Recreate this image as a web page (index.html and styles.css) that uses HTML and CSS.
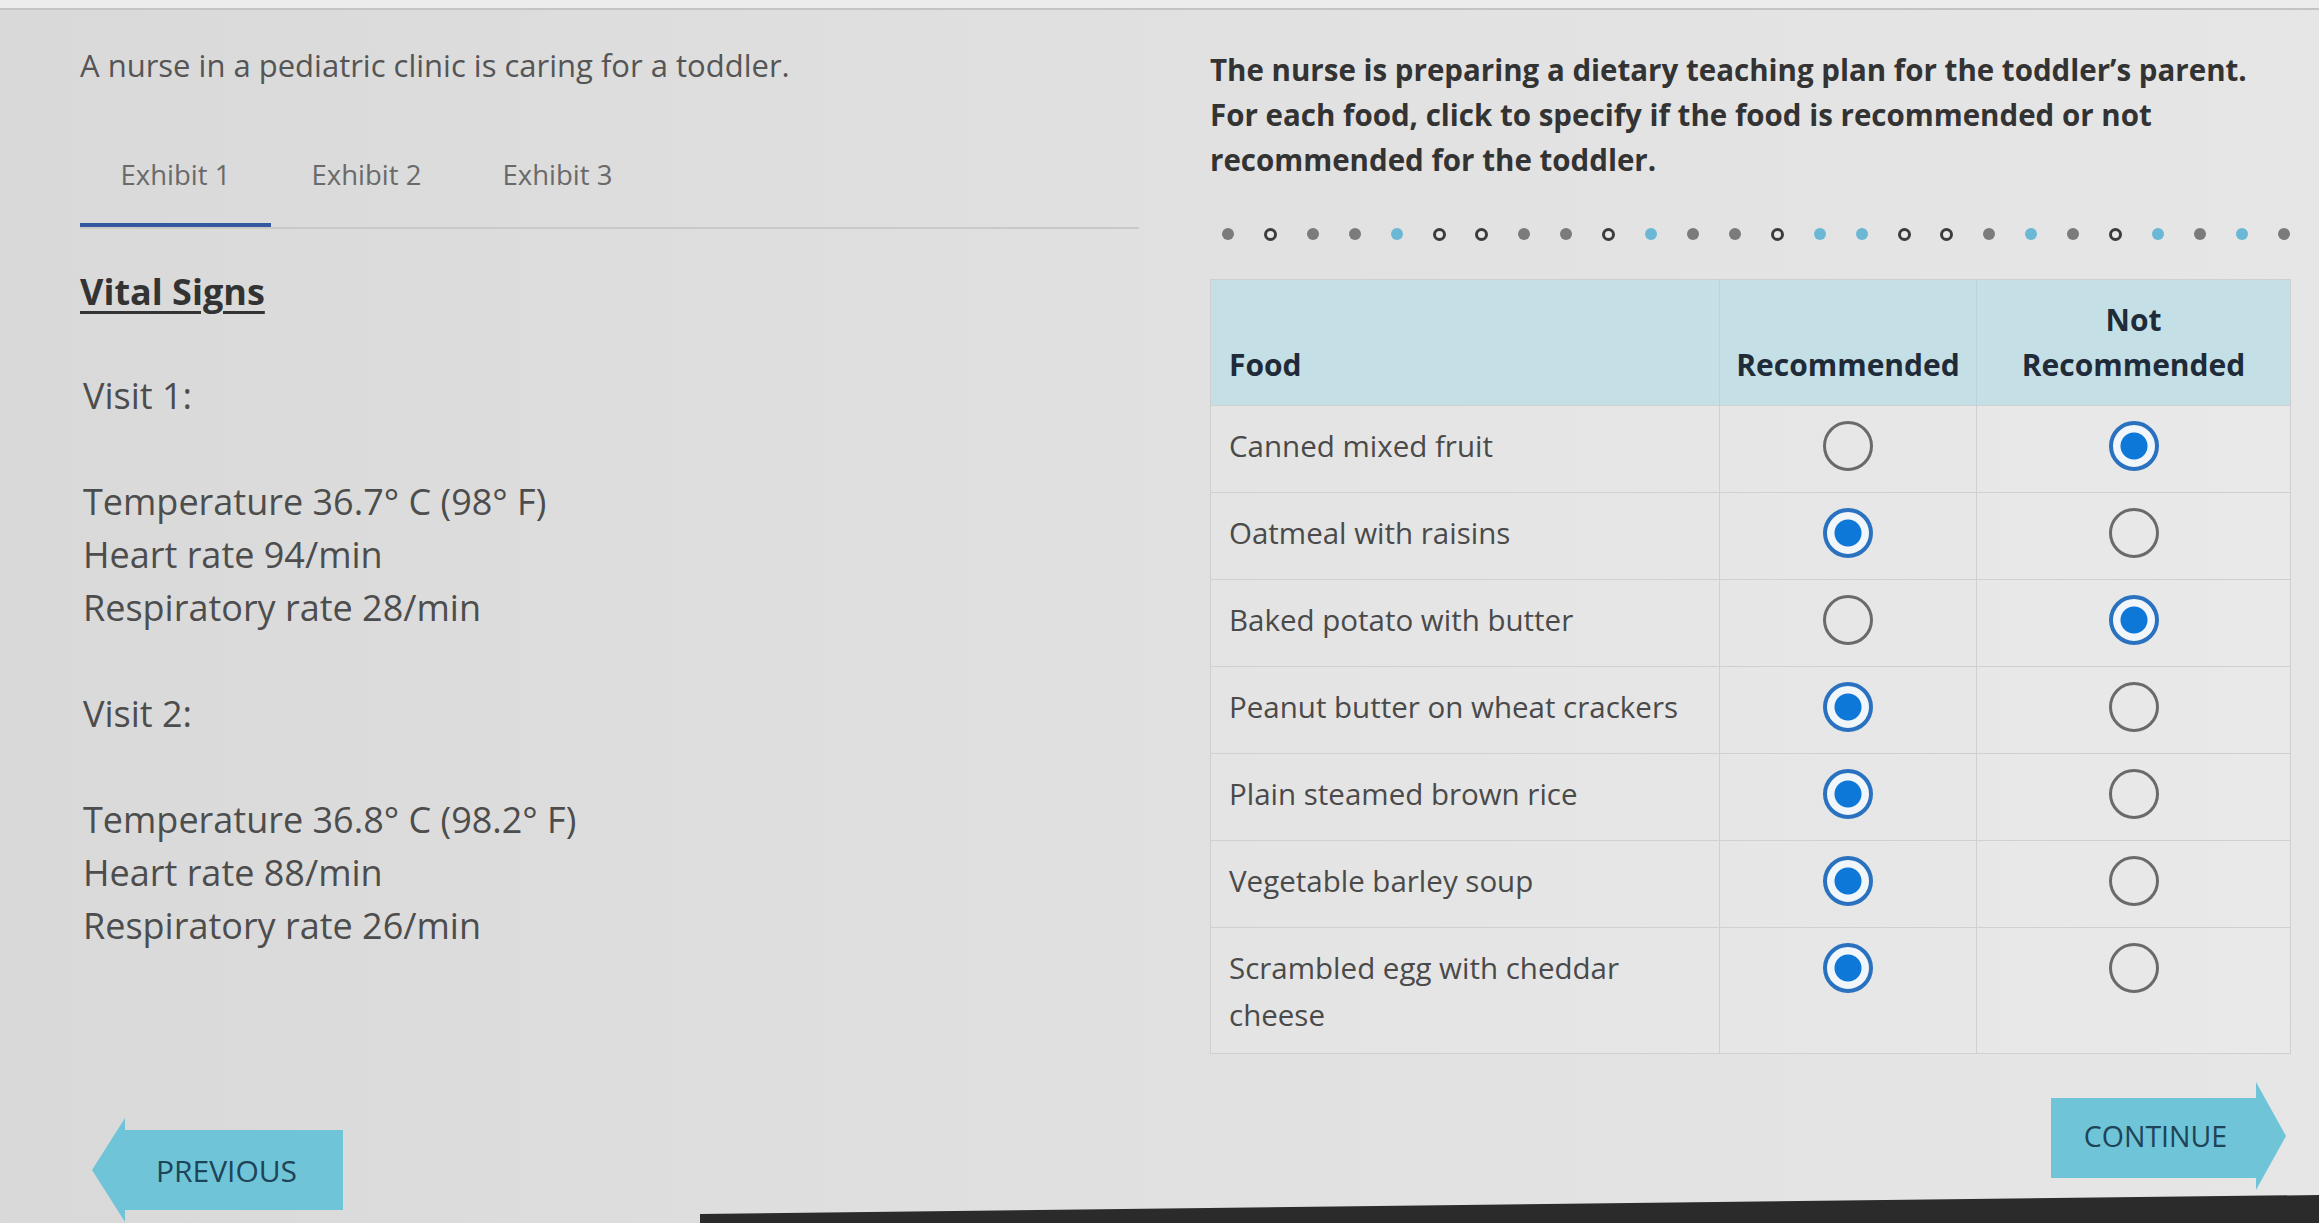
FILE: index.html
```html
<!DOCTYPE html>
<html lang="en">
<head>
<meta charset="utf-8">
<title>Dietary teaching plan</title>
<link rel="stylesheet" href="styles.css">
</head>
<body>
<div class="topbar"></div>
<main class="main">
  <section class="left">
    <p class="scenario">A nurse in a pediatric clinic is caring for a toddler.</p>
    <nav class="tabs">
      <div class="tab active">Exhibit 1</div>
      <div class="tab">Exhibit 2</div>
      <div class="tab">Exhibit 3</div>
    </nav>
    <h2 class="exhibit-title">Vital Signs</h2>
    <div class="vitals">
      <p class="gap-after">Visit 1:</p>
      <p>Temperature 36.7° C (98° F)</p>
      <p>Heart rate 94/min</p>
      <p class="gap-after">Respiratory rate 28/min</p>
      <p class="gap-after">Visit 2:</p>
      <p>Temperature 36.8° C (98.2° F)</p>
      <p>Heart rate 88/min</p>
      <p>Respiratory rate 26/min</p>
    </div>
  </section>
  <section class="right">
    <p class="question">The nurse is preparing a dietary teaching plan for the toddler’s parent. For each food, click to specify if the food is recommended or not recommended for the toddler.</p>
    <div class="dots">
      <span class="dot g"></span><span class="dot o"></span><span class="dot g"></span><span class="dot g"></span><span class="dot b"></span><span class="dot o"></span><span class="dot o"></span><span class="dot g"></span><span class="dot g"></span><span class="dot o"></span><span class="dot b"></span><span class="dot g"></span><span class="dot g"></span><span class="dot o"></span><span class="dot b"></span><span class="dot b"></span><span class="dot o"></span><span class="dot o"></span><span class="dot g"></span><span class="dot b"></span><span class="dot g"></span><span class="dot o"></span><span class="dot b"></span><span class="dot g"></span><span class="dot b"></span><span class="dot g"></span>
    </div>
    <table class="grid">
      <colgroup><col class="c-food"><col class="c-rec"><col class="c-not"></colgroup>
      <thead>
        <tr><th class="th-food">Food</th><th>Recommended</th><th>Not<br>Recommended</th></tr>
      </thead>
      <tbody>
        <tr><td class="food">Canned mixed fruit</td><td><span class="radio"></span></td><td><span class="radio on"></span></td></tr>
        <tr><td class="food">Oatmeal with raisins</td><td><span class="radio on"></span></td><td><span class="radio"></span></td></tr>
        <tr><td class="food">Baked potato with butter</td><td><span class="radio"></span></td><td><span class="radio on"></span></td></tr>
        <tr><td class="food">Peanut butter on wheat crackers</td><td><span class="radio on"></span></td><td><span class="radio"></span></td></tr>
        <tr><td class="food">Plain steamed brown rice</td><td><span class="radio on"></span></td><td><span class="radio"></span></td></tr>
        <tr><td class="food">Vegetable barley soup</td><td><span class="radio on"></span></td><td><span class="radio"></span></td></tr>
        <tr><td class="food">Scrambled egg with cheddar cheese</td><td><span class="radio on"></span></td><td><span class="radio"></span></td></tr>
      </tbody>
    </table>
  </section>
</main>
<footer class="nav">
  <button class="btn prev">PREVIOUS</button>
  <button class="btn next">CONTINUE</button>
</footer>
<div class="bezel"></div>
</body>
</html>
```
FILE: styles.css
```css
html, body {
  margin: 0;
  padding: 0;
}
body {
  width: 2319px;
  height: 1223px;
  overflow: hidden;
  position: relative;
  background: linear-gradient(90deg, #d9d9d9 0%, #e0e0e0 45%, #e6e6e6 100%);
  font-family: "Open Sans", "Noto Sans", sans-serif;
  color: #4a4a4a;
}
.topbar {
  height: 8px;
  background: #ececec;
  border-bottom: 2px solid #c4c4c4;
}
.main {
  display: grid;
  grid-template-columns: 1059px 1080px;
  column-gap: 71px;
  padding-left: 80px;
  padding-top: 35px;
}
p { margin: 0; }

/* left column */
.scenario {
  font-size: 31px;
  line-height: 40px;
  color: #555;
}
.tabs {
  display: flex;
  margin-top: 72px;
  border-bottom: 2px solid #c9c9c9;
}
.tab {
  width: 191px;
  text-align: center;
  font-size: 27.5px;
  line-height: 36px;
  color: #6a6a6a;
  padding-bottom: 30px;
  border-bottom: 4px solid transparent;
}
.tab.active {
  border-bottom-color: #3557a0;
}
.exhibit-title {
  margin: 36px 0 51px;
  font-size: 36px;
  line-height: 53px;
  font-weight: 700;
  color: #333;
  text-decoration: underline;
  text-underline-offset: 6px;
  text-decoration-thickness: 3px;
}
.vitals {
  padding-left: 3px;
}
.vitals p {
  font-size: 36px;
  line-height: 53px;
  color: #4d4d4d;
}
.vitals p.gap-after {
  margin-bottom: 53px;
}

/* right column */
.question {
  margin-top: 2px;
  max-width: 1060px;
  font-size: 29.5px;
  line-height: 45px;
  font-weight: 700;
  color: #333;
}
.dots {
  display: flex;
  justify-content: space-between;
  align-items: center;
  margin: 46px 0 0 12px;
  height: 12px;
}
.dot {
  width: 12px;
  height: 12px;
  border-radius: 50%;
  box-sizing: border-box;
}
.dot.g { background: #7b7b7b; }
.dot.b { background: #6bb8d6; }
.dot.o { width: 13px; height: 13px; border: 3px solid #3c3c3c; background: #e8e8e8; }

.grid {
  margin-top: 39px;
  width: 1080px;
  border-collapse: collapse;
  table-layout: fixed;
  border: 1px solid #cfcfcf;
}
.c-food { width: 509px; }
.c-rec { width: 257px; }
.c-not { width: 314px; }
.grid th {
  background: #c5dfe6;
  color: #1f2b38;
  font-size: 30px;
  line-height: 45px;
  font-weight: 700;
  text-align: center;
  vertical-align: bottom;
  padding: 17px 10px 18px;
  border-left: 1px solid #b8d3db;
}
.grid th.th-food {
  text-align: left;
  padding-left: 18px;
  border-left: none;
}
.grid td {
  border: 1px solid #d0d0d0;
  vertical-align: top;
  height: 55px;
  padding: 16px 18px 15px;
  font-size: 29.5px;
  line-height: 47px;
  color: #4a4a4a;
  text-align: center;
  background: rgba(255,255,255,0.12);
}
.grid td.food {
  text-align: left;
}
.radio {
  display: inline-block;
  width: 50px;
  height: 50px;
  margin-top: -1px;
  border-radius: 50%;
  box-sizing: border-box;
  border: 3px solid #6a6a6a;
  vertical-align: top;
}
.radio.on {
  border: 4px solid #2a72c0;
  background: radial-gradient(circle, #0d78d8 0 13px, #f1f6fa 14px);
}

/* footer nav */
.nav {
  display: flex;
  justify-content: space-between;
  align-items: flex-start;
  padding: 0 33px 0 92px;
}
.btn {
  border: none;
  margin: 0;
  background: #6fc5d7;
  color: #1d4457;
  font-family: "Open Sans", "Noto Sans", sans-serif;
  cursor: pointer;
}
.btn.prev {
  width: 251px;
  height: 104px;
  margin-top: 64px;
  padding: 0 0 0 18px;
  font-size: 30px;
  clip-path: polygon(0 50%, 33px 0, 33px 12px, 100% 12px, 100% 92px, 33px 92px, 33px 100%);
}
.btn.next {
  width: 235px;
  height: 108px;
  margin-top: 28px;
  padding: 0 26px 0 0;
  font-size: 28.5px;
  clip-path: polygon(0 16px, 205px 16px, 205px 0, 100% 50%, 205px 100%, 205px 96px, 0 96px);
}
.bezel {
  position: absolute;
  left: 700px;
  right: 0;
  bottom: 0;
  height: 30px;
  background: #2b2b2b;
  clip-path: polygon(0 21px, 100% 2px, 100% 100%, 0 100%);
}
```
